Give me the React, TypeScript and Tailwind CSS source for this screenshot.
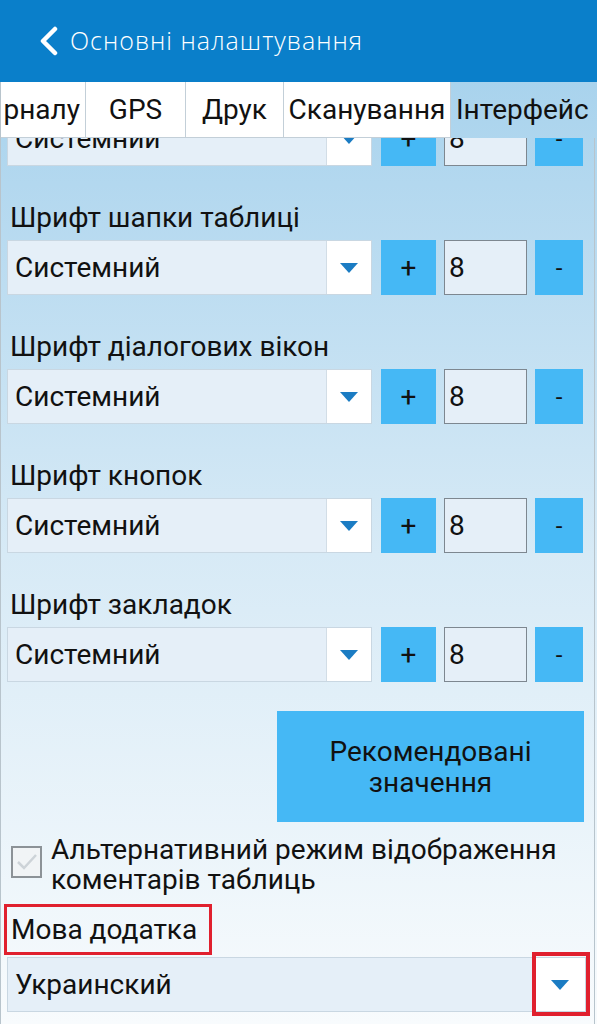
import React from "react";

const font = { fontFamily: "Roboto, 'Noto Sans', sans-serif" };

function Arrow() {
  return (
    <svg width="20" height="12" viewBox="0 0 20 12">
      <polygon points="1,1 19,1 10,11" fill="#1b7cc3" />
    </svg>
  );
}

function FontRow() {
  return (
    <div className="flex h-[55px] w-[577px] items-stretch">
      <div className="flex w-[365px] border border-[#c9d7e2]">
        <div className="flex flex-1 items-center bg-[#e5eff8] pl-[7px] text-[28px] text-[#111]">Системний</div>
        <div className="flex w-[45px] items-center justify-center border-l border-[#d2dde6] bg-white">
          <Arrow />
        </div>
      </div>
      <div className="ml-[9px] flex w-[55px] items-center justify-center bg-[#45b8f5] text-[28px] text-[#111]">+</div>
      <div className="ml-[8px] flex w-[83px] items-center border border-[#7d8790] bg-[#e5eff8] pl-[4px] text-[28px] text-[#111]">8</div>
      <div className="ml-[8px] flex w-[48px] items-center justify-center bg-[#45b8f5] text-[24px] text-[#111]">-</div>
    </div>
  );
}

function Label({ text }: { text: string }) {
  return (
    <div className="flex h-[74px] items-end pb-[6px] pl-[3px] text-[28px] leading-[32px] text-[#111]">{text}</div>
  );
}

export default function App() {
  return (
    <div className="relative flex h-[1024px] w-[597px] flex-col overflow-hidden bg-white" style={font}>
      <div className="flex h-[82px] shrink-0 items-center bg-[#0a7fca] pl-[38px]">
        <svg width="22" height="30" viewBox="0 0 22 30">
          <polyline points="17,3 5,15 17,27" fill="none" stroke="white" strokeWidth="4.5" strokeLinecap="round" strokeLinejoin="round" />
        </svg>
        <span className="ml-[10px] text-[25px] font-light tracking-[1px] text-white" style={{ fontFamily: "'Open Sans', sans-serif" }}>
          Основні налаштування
        </span>
      </div>
      <div className="flex flex-1 flex-col bg-gradient-to-b from-[#a9d3ed] via-[#d7eaf6] to-[#f8fbfd] border-l border-[#b8c4cc]">
        <div className="flex h-[56px] shrink-0 text-[28px] text-[#111]">
          <div className="flex w-[85px] items-center justify-end border-r border-b border-[#c3cfd8] bg-white pr-[5px]">рналу</div>
          <div className="flex w-[100px] items-center justify-center border-r border-b border-[#c3cfd8] bg-white">GPS</div>
          <div className="flex w-[98px] items-center justify-center border-r border-b border-[#c3cfd8] bg-white">Друк</div>
          <div className="flex w-[167px] items-center justify-center border-r border-b border-[#c3cfd8] bg-white">Сканування</div>
          <div className="flex flex-1 items-center pl-[5px]">Інтерфейс</div>
        </div>
        <div className="flex flex-col border-r border-[#b8c4cc] w-[594px] flex-1 pl-[6px]">
          <div className="h-[28px] overflow-hidden">
            <div className="mt-[-27px]">
              <FontRow />
            </div>
          </div>
          <Label text="Шрифт шапки таблиці" />
          <FontRow />
          <Label text="Шрифт діалогових вікон" />
          <FontRow />
          <Label text="Шрифт кнопок" />
          <FontRow />
          <Label text="Шрифт закладок" />
          <FontRow />
          <div className="ml-[270px] mt-[29px] flex h-[111px] w-[307px] flex-col items-center justify-center bg-[#45b8f5] text-[28px] leading-[31px] text-[#111]">
            <span>Рекомендовані</span>
            <span>значення</span>
          </div>
          <div className="mt-[13px] flex h-[60px]">
            <div className="ml-[4px] mt-[11px] flex h-[32px] w-[31px] items-center justify-center border-2 border-[#8c9297] bg-[#f1f4f6]">
              <svg width="24" height="20" viewBox="0 0 24 20">
                <polyline points="3,10 9,16 21,3" fill="none" stroke="#cdd3d8" strokeWidth="2.5" />
              </svg>
            </div>
            <div className="ml-[9px] text-[28px] leading-[30px] text-[#111]">
              Альтернативний режим відображення
              <br />
              коментарів таблиць
            </div>
          </div>
          <div className="ml-[-3px] mt-[9px] flex h-[51px] w-[208px] items-center border-[3px] border-[#e0202e] pl-[4px] text-[28px] text-[#111]">
            Мова додатка
          </div>
          <div className="relative mt-[2px] flex h-[55px] w-[579px] border border-[#c9d7e2]">
            <div className="flex flex-1 items-center bg-[#e5eff8] pl-[7px] text-[28px] text-[#111]">Украинский</div>
            <div className="flex w-[50px] items-center justify-center bg-white">
              <Arrow />
            </div>
            <div className="absolute right-[-5px] top-[-6px] h-[64px] w-[58px] border-[4px] border-[#e0202e]" />
          </div>
        </div>
      </div>
    </div>
  );
}
